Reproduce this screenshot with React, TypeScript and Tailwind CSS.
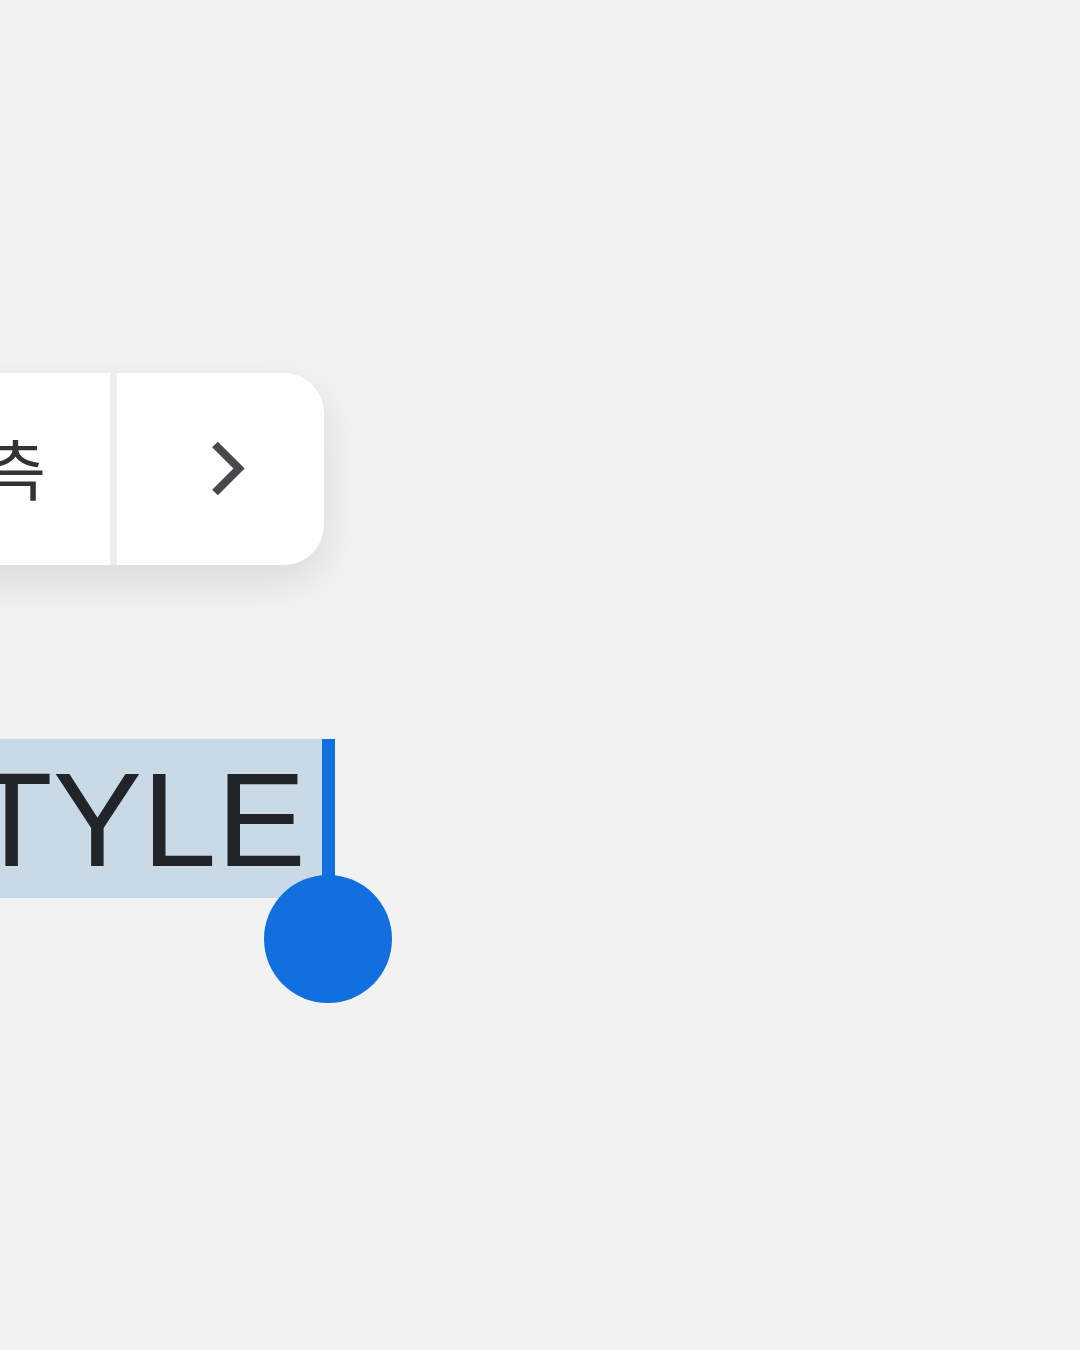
export default function App() {
  return (
    <div className="relative min-h-[1350px] w-[1080px] overflow-hidden bg-[#f2f2f2] font-['Roboto','Noto_Sans_CJK_KR',sans-serif]">
      <div className="pt-[373px]">
        <div className="ml-[-300px] flex h-[192px] w-[624px] rounded-r-[40px] bg-white shadow-[0_16px_44px_rgba(0,0,0,0.10)]">
          <div className="flex w-[410px] items-center justify-end pr-[64px]">
            <span className="-translate-y-[3px] font-['Noto_Sans_CJK_KR',sans-serif] text-[66px] leading-none text-[#333333]">
              예측
            </span>
          </div>
          <div className="w-[7px] bg-[#ededed]" />
          <button className="flex flex-1 items-center justify-center rounded-r-[40px]">
            <svg width="60" height="60" viewBox="0 0 60 60" fill="none">
              <polyline
                points="24,5.5 48,29.5 24,53.5"
                stroke="#48484c"
                strokeWidth="8"
                strokeLinejoin="miter"
                strokeLinecap="butt"
              />
            </svg>
          </button>
        </div>
      </div>

      <div className="pt-[174px]">
        <div className="relative ml-[-200px] flex h-[159px] w-[522px] justify-end bg-[#c9d9e6] pr-[16px]">
          <span className="font-['Liberation_Sans',Arial,sans-serif] text-[134px] leading-[161px] text-[#212428]">
            STYLE
          </span>
          <div className="absolute right-[-13px] top-0 h-[141px] w-[13px] bg-[#116fe0]" />
          <div className="absolute right-[-70px] top-[136px] h-[128px] w-[128px] rounded-full bg-[#116fe0]" />
        </div>
      </div>
    </div>
  );
}
